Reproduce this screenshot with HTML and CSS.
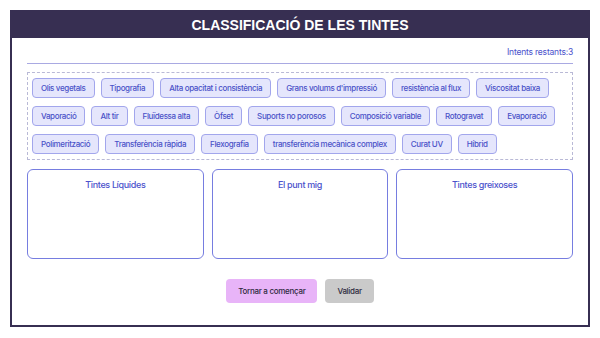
FILE: index.html
```html
<!DOCTYPE html>
<html lang="ca">
<head>
    <meta charset="UTF-8">
    <meta name="viewport" content="width=device-width, initial-scale=1.0">
    <title>Classificació de les tintes</title>
    <link rel="stylesheet" href="styles.css">
</head>
<body>
    <div class="game">
        <div class="game-header">CLASSIFICACIÓ DE LES TINTES</div>
        <div class="game-body">
            <div class="attempts">Intents restants:<span id="attempts">3</span></div>

            <div id="bank" class="bank">
                <div class="tag">Olis vegetals</div>
                <div class="tag">Tipografia</div>
                <div class="tag">Alta opacitat i consistència</div>
                <div class="tag">Grans volums d'impressió</div>
                <div class="tag">resistència al flux</div>
                <div class="tag">Viscositat baixa</div>
                <div class="tag">Vaporació</div>
                <div class="tag">Alt tir</div>
                <div class="tag">Fluïdessa alta</div>
                <div class="tag">Òfset</div>
                <div class="tag">Suports no porosos</div>
                <div class="tag">Composició variable</div>
                <div class="tag">Rotogravat</div>
                <div class="tag">Evaporació</div>
                <div class="tag">Polimerització</div>
                <div class="tag">Transferència ràpida</div>
                <div class="tag">Flexografia</div>
                <div class="tag">transferència mecànica complex</div>
                <div class="tag">Curat UV</div>
                <div class="tag">Híbrid</div>
            </div>

            <div class="zones">
                <div class="zone"><p class="zone-title">Tintes Líquides</p></div>
                <div class="zone"><p class="zone-title">El punt mig</p></div>
                <div class="zone"><p class="zone-title">Tintes greixoses</p></div>
            </div>

            <div class="actions">
                <button class="btn btn-reset">Tornar a començar</button>
                <button class="btn btn-check">Validar</button>
            </div>
        </div>
    </div>
</body>
</html>
```

FILE: styles.css
```css
body {
    margin: 0;
    font-family: Inter, 'Noto Sans', sans-serif;
}
.game {
    margin: 10px;
    width: 580px;
    height: 317px;
    box-sizing: border-box;
    border: 2px solid #372f52;
    background-color: #fff;
}
.game-header {
    height: 26px;
    line-height: 27px;
    background-color: #372f52;
    color: #fff;
    text-align: center;
    font-family: 'Liberation Sans', Arial, sans-serif;
    font-weight: bold;
    font-size: 14px;
}
.game-body {
    padding: 0 15px;
}
.attempts {
    padding: 8px 0 5px;
    font-size: 8.5px;
    line-height: 12px;
    letter-spacing: -0.2px;
    text-align: right;
    color: #4b52cc;
    border-bottom: 1px solid #a9a9e2;
}
.bank {
    margin-top: 8px;
    padding: 5px 4px;
    border: 1px dashed #b9b9d6;
    display: flex;
    flex-wrap: wrap;
    gap: 8px 6px;
}
.tag {
    height: 20px;
    box-sizing: border-box;
    padding: 0 8px;
    display: flex;
    align-items: center;
    font-size: 8px;
    font-weight: 500;
    letter-spacing: -0.35px;
    color: #4b52c8;
    background-color: #e5e6fc;
    border: 1px solid #a2a6ec;
    border-radius: 4px;
    cursor: grab;
}
.zones {
    margin-top: 9px;
    display: grid;
    grid-template-columns: repeat(3, 1fr);
    gap: 8px;
}
.zone {
    height: 90px;
    box-sizing: border-box;
    border: 1px solid #767de0;
    border-radius: 6px;
}
.zone-title {
    margin: 9px 0 0;
    text-align: center;
    font-size: 9px;
    font-weight: 500;
    letter-spacing: -0.35px;
    color: #4b52cc;
}
.actions {
    margin-top: 20px;
    display: flex;
    justify-content: center;
    gap: 8px;
}
.btn {
    height: 24px;
    padding: 0 12px;
    font-family: Inter, 'Noto Sans', sans-serif;
    font-size: 8px;
    font-weight: 500;
    letter-spacing: -0.3px;
    color: #2e2a40;
    border: none;
    border-radius: 4px;
    cursor: pointer;
}
.btn-reset {
    background-color: #e8b4f8;
}
.btn-check {
    background-color: #cacaca;
}
```
